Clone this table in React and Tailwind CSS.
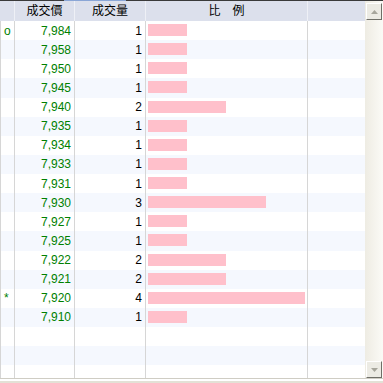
import React from 'react';

const trades = [
  { mark: 'o', price: '7,984', vol: 1 },
  { price: '7,958', vol: 1 },
  { price: '7,950', vol: 1 },
  { price: '7,945', vol: 1 },
  { price: '7,940', vol: 2 },
  { price: '7,935', vol: 1 },
  { price: '7,934', vol: 1 },
  { price: '7,933', vol: 1 },
  { price: '7,931', vol: 1 },
  { price: '7,930', vol: 3 },
  { price: '7,927', vol: 1 },
  { price: '7,925', vol: 1 },
  { price: '7,922', vol: 2 },
  { price: '7,921', vol: 2 },
  { mark: '*', price: '7,920', vol: 4 },
  { price: '7,910', vol: 1 },
];

// pad with empty rows so the grid fills the panel
const rows = [...trades, {}, {}, {}];

const ScrollButton = ({ up }) => (
  <div className="w-[16px] h-[17px] bg-[#ecebe4] border-t border-l border-t-white border-l-white border-r border-b border-r-[#6f6f68] border-b-[#6f6f68] flex items-center justify-center">
    <svg width="7" height="4" viewBox="0 0 7 4">
      {up ? <polygon points="0,4 7,4 3.5,0" fill="#a7a69c" /> : <polygon points="0,0 7,0 3.5,4" fill="#a7a69c" />}
    </svg>
  </div>
);

const App = () => {
  return (
    <div className="w-[383px] h-[383px] overflow-hidden bg-white flex flex-col font-['Liberation_Sans','Noto_Sans_CJK_TC',sans-serif] text-[12px] leading-none">
      {/* top edge */}
      <div className="h-[1px] flex shrink-0">
        <div className="w-[64px] bg-[#3a3a3a]" />
        <div className="w-[62px] bg-[#8aa6d6]" />
        <div className="flex-1 bg-[#3a3a3a]" />
      </div>

      <div className="flex h-[377px] shrink-0">
        {/* grid */}
        <div className="w-[365px] flex flex-col overflow-hidden">
          <div className="h-[20px] shrink-0 flex bg-[#dce0ec] text-black">
            <div className="w-[15px] border-r border-[#eef0f6]" />
            <div className="w-[60px] border-r border-[#eef0f6] flex items-center justify-center">成交價</div>
            <div className="w-[71px] border-r border-[#eef0f6] flex items-center justify-center">成交量</div>
            <div className="w-[162px] border-r border-[#eef0f6] flex items-center justify-center">比　例</div>
            <div className="flex-1" />
          </div>

          <div className="flex-1 flex flex-col">
            {rows.map((r, i) => (
              <div key={i} className={`h-[19.14px] shrink-0 flex ${i % 2 ? 'bg-[#f5f8fe]' : 'bg-white'}`}>
                <div className="w-[15px] border-l border-r border-[#d6d6d6] pl-[3px] flex items-center text-[#008000]">{r.mark}</div>
                <div className="w-[60px] border-r border-[#d6d6d6] pr-[3px] flex items-center justify-end text-[#008000]">{r.price}</div>
                <div className="w-[71px] border-r border-[#d6d6d6] pr-[3px] flex items-center justify-end text-black">{r.vol}</div>
                <div className="w-[162px] border-r border-[#d6d6d6] pl-[2px] pt-[3px]">
                  {r.vol ? <div className="h-[12px] bg-[#ffc0cb]" style={{ width: Math.round(r.vol * 39.2) }} /> : null}
                </div>
                <div className="flex-1" />
              </div>
            ))}
          </div>
        </div>

        {/* vertical scrollbar */}
        <div className="w-[18px] flex flex-col justify-between items-start pl-[1px] pt-[2px] bg-gradient-to-r from-[#eeece3] to-[#fbfaf6]">
          <ScrollButton up />
          <ScrollButton />
        </div>
      </div>

      {/* bottom edge */}
      <div className="h-[1px] shrink-0 bg-[#cfcdc4]" />
      <div className="h-[2px] shrink-0 bg-white" />
      <div className="h-[2px] shrink-0 bg-[#e3e1d6]" />
    </div>
  );
};

export default App;
